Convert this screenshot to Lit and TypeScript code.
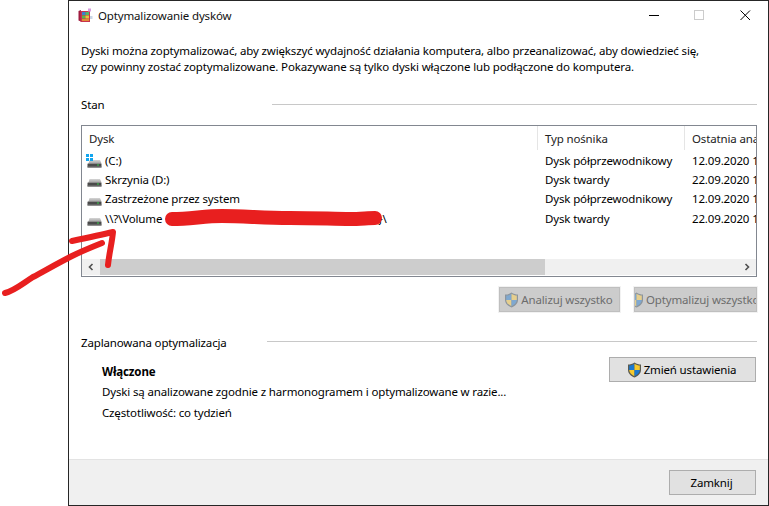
import { LitElement, html, css, svg } from "lit";
import { customElement } from "lit/decorators.js";

const drive = (win = false) => html`<svg class="drive" width="18" height="16" viewBox="0 0 18 16">
  <defs>
    <linearGradient id="drv" x1="0" y1="0" x2="0" y2="1">
      <stop offset="0" stop-color="#d6d6d6" />
      <stop offset="1" stop-color="#a2a2a2" />
    </linearGradient>
  </defs>
  <path d="M3.5 10.5 L4.5 7 H15 L16.5 10.5 Z" fill="url(#drv)"/>
  <rect x="2.5" y="10.5" width="14" height="4" rx="0.5" fill="#4b4b4b"/>
  <rect x="2.5" y="13.5" width="14" height="1" fill="#7c7c7c"/>
  <rect x="12" y="11.5" width="2" height="1" fill="#35d04a"/>
  ${win ? svg`<g fill="#12a5ee"><rect x="1" y="1" width="3" height="3"/><rect x="5" y="1" width="3" height="3"/><rect x="1" y="5" width="3" height="3"/><rect x="5" y="5" width="3" height="3"/></g>` : ""}
</svg>`;

const shield = (muted = false) => html`<svg class="shield" width="15" height="16" viewBox="0 0 15 16">
  <path d="M7.5 .5 C5.5 2 3 2.6 1 2.6 V8 C1 11.5 4 14 7.5 15.5 C11 14 14 11.5 14 8 V2.6 C12 2.6 9.5 2 7.5 .5Z" fill="${muted ? "#8c949c" : "#5a5a50"}"/>
  <path d="M7.5 1.8 C5.8 3 4 3.5 2.2 3.6 V8 H7.5Z" fill="${muted ? "#7fa8d0" : "#1a78d0"}"/>
  <path d="M7.5 1.8 C9.2 3 11 3.5 12.8 3.6 V8 H7.5Z" fill="${muted ? "#e6cf8e" : "#f6c92c"}"/>
  <path d="M2.2 8 H7.5 V14.2 C4.6 12.8 2.4 11 2.2 8Z" fill="${muted ? "#e6cf8e" : "#f6c92c"}"/>
  <path d="M12.8 8 H7.5 V14.2 C10.4 12.8 12.6 11 12.8 8Z" fill="${muted ? "#7fa8d0" : "#1a78d0"}"/>
</svg>`;

@customElement("app-root")
export class AppRoot extends LitElement {
  static styles = css`
    :host {
      display: block;
      position: relative;
      width: 769px;
      height: 506px;
      overflow: hidden;
      background: #fff;
      font-family: "Noto Sans", "Open Sans", sans-serif;
      font-size: 11.5px;
      letter-spacing: -0.15px;
      color: #000;
      padding-left: 68px;
      box-sizing: border-box;
    }
    .window {
      width: 701px;
      height: 506px;
      box-sizing: border-box;
      border: 1px solid #262626;
      display: flex;
      flex-direction: column;
      background: #fff;
    }
    .titlebar {
      height: 28px;
      display: flex;
      align-items: center;
      padding-left: 9px;
      flex: none;
    }
    .title { margin-left: 5px; color: #111; }
    .controls { margin-left: auto; display: flex; align-items: center; }
    .controls svg { display: block; margin: 0 17.5px; }
    .content { flex: 1; padding: 14px 11px 0 12px; display: flex; flex-direction: column; min-height: 0; }
    .desc { margin: 0; line-height: 16px; height: 32px; white-space: nowrap; }
    .section { display: flex; align-items: center; margin-top: 19px; height: 20px; }
    .section.second { margin-top: 20px; }
    .section .rule { height: 1px; background: #c8c8c8; margin-left: auto; }
    .stan-rule { width: 485px; }
    .plan-rule { width: 490px; margin-bottom: 2px; }
    .listbox {
      margin-top: 11px;
      width: 676px;
      height: 152px;
      box-sizing: border-box;
      border: 1px solid #828790;
      display: flex;
      flex-direction: column;
    }
    .head {
      display: grid;
      grid-template-columns: 456px 147px 1fr;
      height: 24px;
      flex: none;
    }
    .head div { padding-left: 7px; display: flex; align-items: center; white-space: nowrap; overflow: hidden; border-right: 1px solid #e5e5e5; color: #222; }
    .head div:last-child { border-right: 0; }
    .rows { flex: 1; padding-top: 1px; }
    .row {
      display: grid;
      grid-template-columns: 456px 147px 1fr;
      height: 19.2px;
      align-items: center;
      white-space: nowrap;
    }
    .row > div { overflow: hidden; padding-left: 7px; }
    .name { display: flex; align-items: center; padding-left: 3px !important; }
    .name .drive { flex: none; margin-right: 2px; margin-top: 1px; }
    .hidden-part { display: inline-block; width: 216px; flex: none; }
    .scrollbar { height: 16px; display: flex; background: #f0f0f0; flex: none; margin-bottom: 1px; }
    .arrowbtn { width: 18px; display: flex; align-items: center; justify-content: center; }
    .thumb { width: 445px; background: #cdcdcd; }
    .track { flex: 1; }
    .actions { display: flex; justify-content: flex-end; gap: 14px; margin-top: 10px; width: 676px; }
    .btn {
      box-sizing: border-box;
      height: 25px;
      display: flex;
      align-items: center;
      justify-content: center;
      padding-right: 2px;
      background: #e1e1e1;
      border: 1px solid #adadad;
      white-space: nowrap;
      overflow: hidden;
    }
    .btn.off { background: #cccccc; border: 1px solid #bfbfbf; color: #6d6d6d; outline: 1px solid #f2f2f2; }
    .btn .shield { flex: none; margin-right: 2px; }
    .a1 { width: 121px; }
    .a2 { width: 123px; justify-content: flex-start; }
    .a2 .shield { margin-left: -6px; }
    .sched { display: flex; margin-top: 4px; width: 676px; }
    .sched-main { flex: 1; padding: 5px 0 0 21px; }
    .strong { font-weight: 700; height: 20px; line-height: 21px; }
    .line { height: 21px; line-height: 21px; white-space: nowrap; }
    .change { width: 147px; margin-top: 1px; margin-right: 1px; }
    .footer {
      height: 46px;
      flex: none;
      box-sizing: border-box;
      border-top: 1px solid #e3e3e3;
      background: #f0f0f0;
      display: flex;
      justify-content: flex-end;
      align-items: center;
      padding-right: 12px;
    }
    .close { width: 87px; }
    .ink { position: absolute; left: 0; top: 0; pointer-events: none; }
  `;

  render() {
    return html`
      <div class="window">
        <div class="titlebar">
          <svg width="15" height="15" viewBox="0 0 15 15">
            <path d="M0.5 3 L3 2 V13.5 L0.5 12.5Z" fill="#a01c40"/>
            <rect x="2.5" y="3" width="9.5" height="11" fill="#c8344c"/>
            <rect x="4" y="4" width="3.5" height="3" fill="#3b7fd0"/>
            <rect x="7.5" y="4" width="3.5" height="3" fill="#4fb86a"/>
            <rect x="4" y="7.5" width="3.5" height="3" fill="#56b84a"/>
            <rect x="7.5" y="7.5" width="3.5" height="3" fill="#e8c23c"/>
            <rect x="4" y="11" width="7" height="2" fill="#e08a3a"/>
            <rect x="10" y="0.5" width="3" height="3" fill="#d79be0"/>
            <rect x="12" y="8" width="2.5" height="3" fill="#c9d6e6"/>
          </svg>
          <span class="title">Optymalizowanie dysków</span>
          <div class="controls">
            <svg width="11" height="11" viewBox="0 0 11 11"><rect x="1" y="5" width="10" height="1" fill="#000"/></svg>
            <svg width="11" height="11" viewBox="0 0 11 11"><rect x=".5" y=".5" width="9" height="9" fill="none" stroke="#ccc"/></svg>
            <svg width="11" height="11" viewBox="0 0 11 11"><path d="M.5 .5 L10 10 M10 .5 L.5 10" stroke="#000" fill="none"/></svg>
          </div>
        </div>
        <div class="content">
          <p class="desc">Dyski można zoptymalizować, aby zwiększyć wydajność działania komputera, albo przeanalizować, aby dowiedzieć się,<br />czy powinny zostać zoptymalizowane. Pokazywane są tylko dyski włączone lub podłączone do komputera.</p>
          <div class="section"><span>Stan</span><span class="rule stan-rule"></span></div>
          <div class="listbox">
            <div class="head"><div>Dysk</div><div>Typ nośnika</div><div>Ostatnia ana</div></div>
            <div class="rows">
              <div class="row"><div class="name">${drive(true)}(C:)</div><div>Dysk półprzewodnikowy</div><div>12.09.2020 1</div></div>
              <div class="row"><div class="name">${drive()}Skrzynia (D:)</div><div>Dysk twardy</div><div>22.09.2020 1</div></div>
              <div class="row"><div class="name">${drive()}Zastrzeżone przez system</div><div>Dysk półprzewodnikowy</div><div>12.09.2020 1</div></div>
              <div class="row"><div class="name">${drive()}\\\\?\\Volume<span class="hidden-part"></span>}\\</div><div>Dysk twardy</div><div>22.09.2020 1</div></div>
            </div>
            <div class="scrollbar">
              <div class="arrowbtn"><svg width="8" height="8" viewBox="0 0 8 8"><path d="M5.5 1 L2.5 4 L5.5 7" fill="none" stroke="#505050" stroke-width="1.6"/></svg></div>
              <div class="thumb"></div>
              <div class="track"></div>
              <div class="arrowbtn"><svg width="8" height="8" viewBox="0 0 8 8"><path d="M2.5 1 L5.5 4 L2.5 7" fill="none" stroke="#505050" stroke-width="1.6"/></svg></div>
            </div>
          </div>
          <div class="actions">
            <div class="btn off a1">${shield(true)}Analizuj wszystko</div>
            <div class="btn off a2">${shield(true)}Optymalizuj wszystko</div>
          </div>
          <div class="section second"><span>Zaplanowana optymalizacja</span><span class="rule plan-rule"></span></div>
          <div class="sched">
            <div class="sched-main">
              <div class="strong">Włączone</div>
              <div class="line">Dyski są analizowane zgodnie z harmonogramem i optymalizowane w razie...</div>
              <div class="line">Częstotliwość: co tydzień</div>
            </div>
            <div class="btn change">${shield()}Zmień ustawienia</div>
          </div>
        </div>
        <div class="footer"><div class="btn close">Zamknij</div></div>
      </div>
      <svg class="ink" width="769" height="506" viewBox="0 0 769 506" fill="none" stroke="#e81f1f" stroke-linecap="round" stroke-linejoin="round">
        <path d="M5 293 C14 291 22 284 33 277 C46 270 60 262 72 256 C82 251 92 247 102 243" stroke-width="6"/>
        <path d="M72 241 C86 238 100 235 113 232 C112 243 109 254 108 265" stroke-width="6"/>
        <path d="M172 219 C190 219 205 216 222 216 C245 216 262 218 290 218 C315 218 335 219 350 219 C360 219 368 218 375 218" stroke-width="14"/>
      </svg>
    `;
  }
}
